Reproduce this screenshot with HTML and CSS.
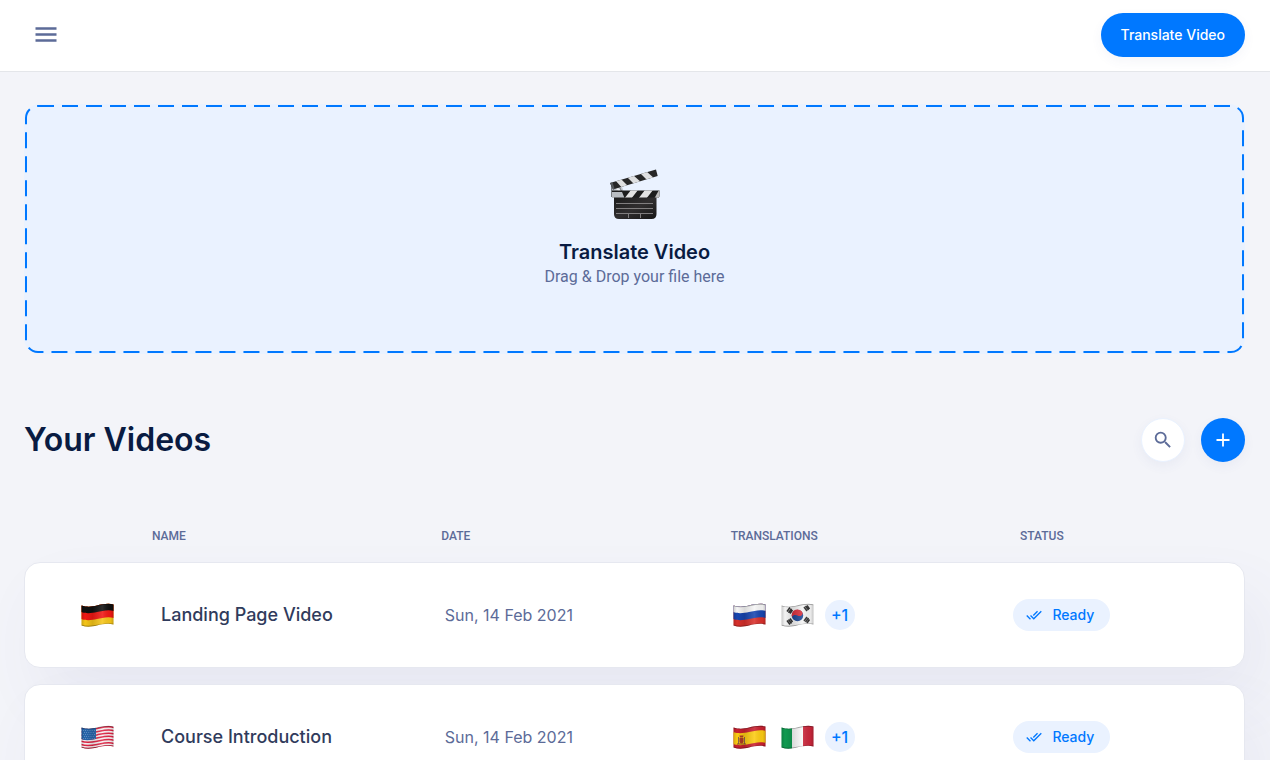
FILE: index.html
```html
<!DOCTYPE html>
<html lang="en">
<head>
<meta charset="utf-8">
<meta name="viewport" content="width=device-width, initial-scale=1">
<title>Your Videos</title>
<link rel="stylesheet" href="styles.css">
</head>
<body>
<svg class="defs" aria-hidden="true">
  <defs>
    <linearGradient id="sheen" x1="0" y1="0" x2="1" y2="0">
      <stop offset="0" stop-color="#000" stop-opacity=".2"/>
      <stop offset=".12" stop-color="#000" stop-opacity="0"/>
      <stop offset=".35" stop-color="#000" stop-opacity=".12"/>
      <stop offset=".65" stop-color="#fff" stop-opacity=".12"/>
      <stop offset=".9" stop-color="#000" stop-opacity=".04"/>
      <stop offset="1" stop-color="#000" stop-opacity=".22"/>
    </linearGradient>
    <linearGradient id="dark" x1="0" y1="0" x2="1" y2="1">
      <stop offset="0" stop-color="#1c1c1c"/>
      <stop offset=".5" stop-color="#302e2f"/>
      <stop offset="1" stop-color="#161616"/>
    </linearGradient>
    <clipPath id="wave"><path d="M.5 2.500c6 2 11 1 15.500 0s11-2.500 16.500-1v20c-6-1.500-12 0-16.500 1s-10 2-15.500 0z"/></clipPath>
    <clipPath id="arm"><path d="M1 15L47 1.500l1.700 6.500L4 21.500z"/></clipPath>
    <clipPath id="bar"><path d="M3 22.500h47.500v5q0 2.500-2.500 2.500H3z"/></clipPath>
    <symbol id="checks" viewBox="0 0 24 24"><path d="M18 7l-1.410-1.410-6.340 6.340 1.410 1.410L18 7zm4.240-1.410L11.660 16.170 7.480 12l-1.410 1.410L11.660 19l12-12-1.420-1.410zM.41 13.410L6 19l1.410-1.410L1.830 12 .41 13.410z"/></symbol>
    <symbol id="shade" viewBox="0 0 33 24"><g clip-path="url(#wave)"><path d="M0 0h33v24H0z" fill="url(#sheen)"/><path d="M.5 2.500c6 2 11 1 15.500 0s11-2.500 16.500-1M.5 22.500c6 2 11 1 15.500 0s11-2.500 16.500-1" fill="none" stroke="#000" stroke-opacity=".3" stroke-width="1.600"/></g></symbol>
  </defs>
</svg>

<header class="topbar">
  <button class="menu-button" type="button" aria-label="Menu">
    <svg viewBox="0 0 24 18" width="24" height="18"><path d="M1.500 2.500h21M1.500 8.500h21M1.500 14.500h21" stroke="currentColor" stroke-width="2.400"/></svg>
  </button>
  <button class="primary-button" type="button">Translate Video</button>
</header>

<main class="page">
  <label class="dropzone">
    <svg class="dropzone-outline" aria-hidden="true"><rect rx="12"/></svg>
    <input class="dropzone-input" type="file" accept="video/*">
    <svg class="clapper" viewBox="0 0 52 52" aria-hidden="true">
      <path d="M2 17l11 2 4 11H3z" fill="#c3c8cf"/>
      <path d="M5 19l5 3-2 6 5 1" fill="none" stroke="#eef0f2" stroke-width="2"/>
      <path d="M2.500 17v12M11 20l4 8" stroke="#777b80"/>
      <g clip-path="url(#arm)">
        <path d="M0 0h52v24H0z" fill="#272727"/>
        <path d="M6 12l5-2 10 10-6 2zM18 9l6-2 9 8-7 2zM31 5l6-2 9 8-7 2z" fill="#dedfe0"/>
        <path d="M0 14l3-1 3 9H0z" fill="#55585b"/>
      </g>
      <g clip-path="url(#bar)">
        <path d="M3 22h49v9H3z" fill="#1d1d1d"/>
        <path d="M3 24h10l3 7H3z" fill="#b9bdc2"/>
        <path d="M22 22h7l-7 9h-7zM36 22h8l-7 9h-8z" fill="#e2e2e2"/>
        <path d="M50 22h2v9h-7z" fill="#bcbcbc"/>
      </g>
      <path d="M5 29.500h42.500V46q0 5-5 5H10q-5 0-5-5z" fill="url(#dark)"/>
      <path d="M7 35.500h37M7 40.500h37M7 45.500h37M19.500 46v4M31.500 46v4" stroke="#8a8889" stroke-width=".9"/>
    </svg>
    <span class="dropzone-title">Translate Video</span>
    <span class="dropzone-hint">Drag &amp; Drop your file here</span>
  </label>

  <section class="videos">
    <div class="videos-head">
      <h1>Your Videos</h1>
      <div class="videos-actions">
        <button class="round-button round-button-light" type="button" aria-label="Search">
          <svg viewBox="0 0 24 24" width="22" height="22"><path fill="currentColor" d="M15.500 14h-.79l-.28-.27A6.471 6.471 0 0 0 16 9.500 6.500 6.500 0 1 0 9.500 16c1.610 0 3.090-.59 4.230-1.570l.27.28v.79l5 4.990L20.490 19l-4.990-5zm-6 0C7.010 14 5 11.990 5 9.500S7.010 5 9.500 5 14 7.010 14 9.500 11.990 14 9.500 14z"/></svg>
        </button>
        <button class="round-button round-button-blue" type="button" aria-label="Add video">
          <svg viewBox="0 0 14 14" width="14" height="14"><path d="M7 .5v13M.5 7h13" stroke="currentColor" stroke-width="1.800"/></svg>
        </button>
      </div>
    </div>

    <table class="video-table">
      <thead>
        <tr><td></td><th scope="col">NAME</th><th scope="col">DATE</th><th scope="col">TRANSLATIONS</th><th scope="col">STATUS</th></tr>
      </thead>
      <tbody>
        <tr>
          <td class="cell-language">
            <svg class="flag" viewBox="0 0 33 24" role="img" aria-label="German"><g clip-path="url(#wave)"><path d="M0 0h33v24H0z" fill="#f5c518"/><path d="M0-5h33V15c-6-2-12 0-17 1s-10 2-16 0z" fill="#f01713"/><path d="M0-5h33V8c-6-2-12 0-17 1s-10 2-16 0z" fill="#101010"/></g><use href="#shade"/></svg>
          </td>
          <td class="cell-name">Landing Page Video</td>
          <td class="cell-date">Sun, 14 Feb 2021</td>
          <td class="cell-translations">
            <div class="flags">
              <svg class="flag" viewBox="0 0 33 24" role="img" aria-label="Russian"><g clip-path="url(#wave)"><path d="M0 0h33v24H0z" fill="#d8302b"/><path d="M0-5h33V15c-6-2-12 0-17 1s-10 2-16 0z" fill="#1745b0"/><path d="M0-5h33V8c-6-2-12 0-17 1s-10 2-16 0z" fill="#f6f6f6"/></g><use href="#shade"/></svg>
              <svg class="flag" viewBox="0 0 33 24" role="img" aria-label="Korean"><g clip-path="url(#wave)"><path d="M0 0h33v24H0z" fill="#f3f3f3"/><circle cx="16.500" cy="12.500" r="5.700" fill="#1c4795"/><path d="M11 14A5.700 5.700 0 1 1 21.800 10.300C21 13.500 18 13.500 16.500 12.500S12 11.500 11 14z" fill="#d8303c"/><path d="M6 8.500l3-4M7.500 9.700l3-4M9 10.500l2.500-3.500M23 4l3 4M24.500 3l3 4M26 2.500l2.500 3.500M6 17.500l3 4M7.500 16.500l3 4M9 15.500l2.500 3.500M23 18l3-4M24.500 19l3-4M26 20l2.500-3.500" stroke="#333" stroke-width="1.500"/></g><use href="#shade"/></svg>
              <span class="more">+1</span>
            </div>
          </td>
          <td class="cell-status"><span class="status"><svg width="16" height="16" aria-hidden="true"><use href="#checks"/></svg>Ready</span></td>
        </tr>
        <tr>
          <td class="cell-language">
            <svg class="flag" viewBox="0 0 33 24" role="img" aria-label="English"><g clip-path="url(#wave)"><path d="M0 0h33v24H0z" fill="#f8f0f1"/><path d="M0 3.500c6 2 11 1 16 0s11-3 17-1M0 6.700c6 2 11 1 16 0s11-3 17-1M0 9.900c6 2 11 1 16 0s11-3 17-1M0 13.100c6 2 11 1 16 0s11-3 17-1M0 16.300c6 2 11 1 16 0s11-3 17-1M0 19.500c6 2 11 1 16 0s11-3 17-1M0 22.500c6 2 11 1 16 0s11-3 17-1" fill="none" stroke="#df2444" stroke-width="1.500"/><path d="M0 0h15v14c-5 1-10 2-15 0z" fill="#2665ac"/><path d="M2 5.500h12M3 7.500h11M2 9.500h12M3 11.500h11M2 13.500h12" stroke="#9fbddd" stroke-width=".6" stroke-dasharray=".8 1.400"/></g><use href="#shade"/></svg>
          </td>
          <td class="cell-name">Course Introduction</td>
          <td class="cell-date">Sun, 14 Feb 2021</td>
          <td class="cell-translations">
            <div class="flags">
              <svg class="flag" viewBox="0 0 33 24" role="img" aria-label="Spanish"><g clip-path="url(#wave)"><path d="M0 0h33v24H0z" fill="#c8202f"/><path d="M0 7c6 2 11 1 16 0s11-3 17-1v12c-6-2-12 0-17 1s-10 2-16 0z" fill="#fccb12"/><path d="M5 12h1v7H5zM11 12h1v7h-1z" fill="#8a6a4a"/><path d="M6.500 13h4v4q-2 3-4 0zM6.500 10.500h4l-.5 2H7z" fill="#ae3b26"/><path d="M4 19h9" stroke="#8a4a28"/></g><use href="#shade"/></svg>
              <svg class="flag" viewBox="0 0 33 24" role="img" aria-label="Italian"><g clip-path="url(#wave)"><path d="M0 0h11v24H0z" fill="#0f9a50"/><path d="M11 0h11v24H11z" fill="#f8f8f8"/><path d="M22 0h11v24H22z" fill="#c9263a"/></g><use href="#shade"/></svg>
              <span class="more">+1</span>
            </div>
          </td>
          <td class="cell-status"><span class="status"><svg width="16" height="16" aria-hidden="true"><use href="#checks"/></svg>Ready</span></td>
        </tr>
      </tbody>
    </table>
  </section>
</main>
</body>
</html>
```

FILE: styles.css
```css
:root {
  --blue: #0078ff;
  --pale: #eaf2ff;
  --ink: #091b42;
  --slate: #5c6b98;
}

* { box-sizing: border-box; }

body {
  margin: 0;
  background: #f3f4f9;
  color: var(--ink);
  font-family: Inter, "Liberation Sans", sans-serif;
}

button {
  border: 0;
  padding: 0;
  font: inherit;
  cursor: pointer;
}

svg { display: block; flex: none; }
.defs { position: absolute; width: 0; height: 0; }

.topbar {
  display: flex;
  align-items: center;
  justify-content: space-between;
  height: 72px;
  padding: 0 25px 2px 34px;
  background: #fff;
  border-bottom: 1px solid #e4e6ea;
}

.menu-button { background: none; color: var(--slate); }

.primary-button {
  height: 44px;
  padding: 0 20px;
  border-radius: 22px;
  background: var(--blue);
  box-shadow: 0 4px 12px rgba(60, 80, 150, .06);
  color: #fff;
  font-size: 14px;
  font-weight: 500;
}

.page { padding: 32px 25px 32px 24px; }

.dropzone {
  position: relative;
  display: flex;
  flex-direction: column;
  align-items: center;
  padding: 64px 24px;
  border-radius: 16px;
  background: var(--pale);
  cursor: pointer;
}

.dropzone-outline {
  position: absolute;
  inset: 0;
  width: 100%;
  height: 100%;
}

.dropzone-outline rect {
  x: 2px;
  y: 2px;
  width: calc(100% - 4px);
  height: calc(100% - 4px);
  fill: none;
  stroke: var(--blue);
  stroke-width: 2px;
  stroke-dasharray: 16 8;
}

.dropzone-input {
  position: absolute;
  width: 1px;
  height: 1px;
  opacity: 0;
}

.clapper { width: 52px; height: 52px; margin-bottom: 16px; }

.dropzone-title {
  font-size: 20px;
  font-weight: 600;
  line-height: 32px;
}

.dropzone-hint {
  margin-bottom: 4px;
  color: var(--slate);
  font-family: Roboto, sans-serif;
  font-size: 16px;
  line-height: 18px;
}

.videos { margin-top: 64px; }

.videos-head {
  display: flex;
  align-items: center;
  justify-content: space-between;
}

h1 {
  margin: 0;
  font-size: 32px;
  font-weight: 600;
  line-height: 44px;
}

.videos-actions { display: flex; gap: 16px; }

.round-button {
  display: flex;
  align-items: center;
  justify-content: center;
  width: 44px;
  height: 44px;
  border-radius: 50%;
  box-shadow: 0 4px 12px rgba(60, 80, 150, .06);
}

.round-button-light {
  border: 1px solid var(--pale);
  background: #fff;
  color: var(--slate);
}

.round-button-blue { background: var(--blue); color: #fff; }

.video-table { display: block; margin-top: 48px; }
.video-table thead { display: block; }

.video-table tbody {
  position: relative;
  z-index: 0;
  display: grid;
  gap: 16px;
}

.video-table tr {
  display: grid;
  grid-template-columns: 128px 9fr 9fr 9fr 7fr;
  align-items: center;
}

.video-table th,
.video-table td { padding: 0; text-align: left; }

.video-table th {
  color: var(--slate);
  font-family: Roboto, sans-serif;
  font-size: 12px;
  font-weight: 500;
  line-height: 52px;
}

.video-table tbody tr {
  position: relative;
  min-height: 106px;
  border: 1px solid #e6e8f0;
  border-radius: 16px;
  background: #fff;
}

.video-table tbody tr::before {
  content: "";
  position: absolute;
  inset: 0;
  z-index: -1;
  border-radius: 16px;
  box-shadow: 16px 32px 64px rgba(90, 90, 160, .07);
}

.video-table .cell-language { padding-left: 56px; }

.video-table .cell-name {
  padding: 0 0 2px 8px;
  color: #303b5c;
  font-size: 18px;
  font-weight: 500;
}

.video-table .cell-date {
  padding-left: 3px;
  color: var(--slate);
  font-size: 16px;
}

.video-table .cell-translations { padding-left: 2px; }
.flag { width: 33px; height: 24px; }
.flags { display: flex; align-items: center; gap: 15px; }

.more {
  width: 30px;
  margin-left: -4px;
  border-radius: 50%;
  background: var(--pale);
  color: var(--blue);
  font-size: 16px;
  font-weight: 500;
  line-height: 30px;
  text-align: center;
}

.video-table .cell-status { padding-right: 16px; margin-left: -6px; }

.status {
  display: inline-flex;
  align-items: center;
  gap: 10px;
  height: 32px;
  padding: 0 16px 0 13px;
  border-radius: 16px;
  background: var(--pale);
  color: var(--blue);
  font-size: 14px;
  font-weight: 500;
  line-height: 16px;
  vertical-align: middle;
}

.status svg { fill: currentColor; }
```
